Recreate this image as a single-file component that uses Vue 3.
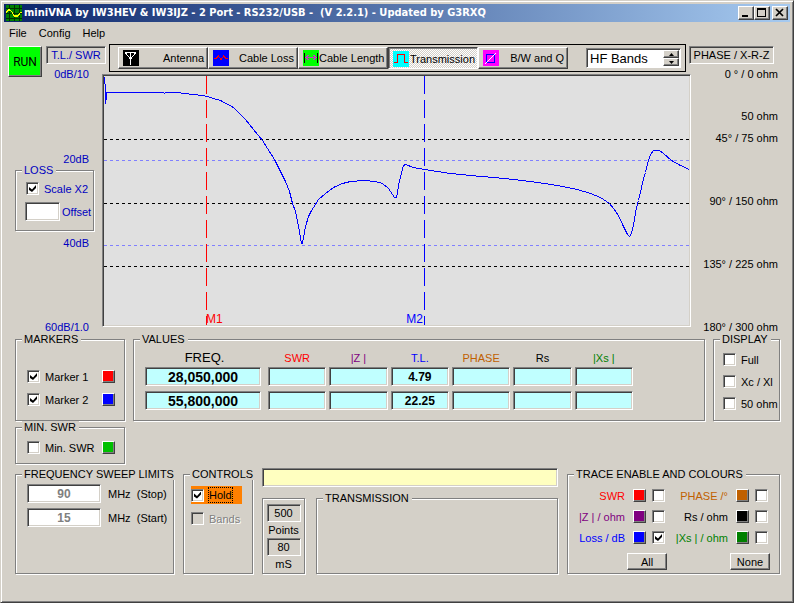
<script setup>
import { ref, computed } from 'vue'

const scaleX2 = ref(true)
const hold = ref(true)
const bands = ref(false)
const minSwr = ref(false)
const offset = ref('')
const stop = ref('90')
const start = ref('15')
const band = ref('HF Bands')
const mode = ref('Transmission')

const modes = ['Antenna', 'Cable Loss', 'Cable Length', 'Transmission', 'B/W and Q']

const markers = ref([
  { label: 'Marker 1', on: true, tone: 'red' },
  { label: 'Marker 2', on: true, tone: 'blue' }
])

const displays = ref([
  { label: 'Full', on: false },
  { label: 'Xc / Xl', on: false },
  { label: '50 ohm', on: false }
])

const traces = ref([
  { label: 'SWR', tone: 'red', on: false },
  { label: 'PHASE /°', tone: 'orange', on: false },
  { label: '|Z | / ohm', tone: 'purple', on: false },
  { label: 'Rs / ohm', tone: 'black', on: false },
  { label: 'Loss / dB', tone: 'blue', on: true },
  { label: '|Xs | / ohm', tone: 'green', on: false }
])

const columns = [
  { label: 'FREQ.', tone: 'freq' },
  { label: 'SWR', tone: 'red' },
  { label: '|Z |', tone: 'purple' },
  { label: 'T.L.', tone: 'blue' },
  { label: 'PHASE', tone: 'orange' },
  { label: 'Rs', tone: 'black' },
  { label: '|Xs |', tone: 'green' }
]

const rows = [
  ['28,050,000', '', '', '4.79', '', '', ''],
  ['55,800,000', '', '', '22.25', '', '', '']
]

const curve = [
  [0, 0], [0, 7], [1, 8], [1, 27], [2, 21], [2, 16], [59, 16], [60, 17], [61, 16], [72, 16],
  [80, 17], [89, 18], [98, 19], [103, 20], [109, 22], [116, 24], [129, 31], [141, 43], [149, 53],
  [158, 64], [170, 83], [176, 95], [181, 105], [185, 115], [188, 127], [191, 135], [193, 145],
  [195, 155], [197, 167], [198, 167], [199, 161], [201, 150], [204, 140], [207, 134], [211, 128],
  [214, 123], [221, 117], [229, 111], [238, 107], [246, 105], [259, 104], [271, 105], [278, 107],
  [284, 112], [288, 118], [290, 121], [292, 121], [295, 104], [298, 93], [299, 89], [301, 88],
  [309, 91], [320, 93], [326, 94], [346, 97], [366, 99], [389, 101], [409, 103], [433, 106],
  [453, 109], [473, 113], [486, 117], [496, 121], [505, 127], [509, 132], [514, 139], [519, 150],
  [523, 158], [525, 160], [527, 157], [529, 149], [532, 131], [534, 124], [537, 111], [539, 102],
  [541, 96], [544, 84], [546, 78], [549, 74], [555, 74], [559, 77], [567, 84], [576, 89], [585, 93]
]
const curvePoints = computed(() => curve.map(p => p.join(',')).join(' '))

function setAll(value) {
  traces.value.forEach(t => { t.on = value })
}
</script>

<template>
  <main class="window">
    <header class="titlebar">
      <svg class="app-icon" viewBox="0 0 16 16" shape-rendering="crispEdges">
        <rect width="16" height="16" fill="#008000" />
        <path d="M3.500 0V16M8.500 0V16M13.500 0V16M0 3.500H16M0 8.500H16M0 13.500H16" stroke="#003000" />
        <path d="M0 8L2 5H4L6 7L8 11H12L14 8L16 7" fill="none" stroke="#ff0" stroke-width="1.300" />
      </svg>
      <h1>miniVNA by IW3HEV &amp; IW3IJZ - 2 Port - RS232/USB -&nbsp; (V 2.2.1) - Updated by G3RXQ</h1>
      <div class="caption-buttons">
        <button type="button" aria-label="Minimize"><svg viewBox="0 0 12 10" shape-rendering="crispEdges"><rect x="2" y="7" width="6" height="2" /></svg></button>
        <button type="button" aria-label="Maximize"><svg viewBox="0 0 12 10" shape-rendering="crispEdges"><path d="M1 0H10V9H1ZM2 2V8H9V2Z" fill-rule="evenodd" /></svg></button>
        <button type="button" class="close" aria-label="Close"><svg viewBox="0 0 12 10"><path d="M2 1L9 8M9 1L2 8" stroke="#000" stroke-width="1.700" /></svg></button>
      </div>
    </header>

    <nav class="menu">
      <a href="#file">File</a>
      <a href="#config">Config</a>
      <a href="#help">Help</a>
    </nav>

    <section class="topbar">
      <button type="button" class="run">RUN</button>
      <div class="axis-title blue-dark">T.L./ SWR</div>
      <div class="toolbar">
        <button v-for="(m, i) in modes" :key="m" type="button" class="mode" :class="{ pressed: mode === m }" @click="mode = m">
          <svg viewBox="0 0 16 16" shape-rendering="crispEdges">
            <template v-if="i === 0">
              <rect width="16" height="16" fill="#000" />
              <path d="M2 2.500H13M7.500 2V15M2.500 3L7.500 9L12.500 3" fill="none" stroke="#fff" />
            </template>
            <template v-else-if="i === 1">
              <rect width="16" height="16" fill="#00f" />
              <path d="M1 8.500H3L5.500 6L8 9.500L10.500 6L13 8.500H15" fill="none" stroke="#f00" />
            </template>
            <template v-else-if="i === 2">
              <rect width="16" height="16" fill="#0f0" />
              <path d="M1.500 3V13M14.500 3V13" stroke="#000" />
              <path d="M3 7.500H13M5.500 5L3 7.500L5.500 10M10.500 5L13 7.500L10.500 10" fill="none" stroke="#c040c0" />
            </template>
            <template v-else-if="i === 3">
              <rect width="16" height="16" fill="#0ff" />
              <path d="M1 11.500H4.500V3.500H11.500V11.500H15" fill="none" stroke="#f00" />
            </template>
            <template v-else>
              <rect width="16" height="16" fill="#f0f" />
              <rect x="3.500" y="4.500" width="8" height="8" fill="none" stroke="#00f" />
              <path d="M2 14L13 3" stroke="#fff" />
            </template>
          </svg>
          <span>{{ m }}</span>
        </button>
        <div class="spin">
          <input v-model="band" type="text" aria-label="Band">
          <div class="spin-buttons">
            <button type="button" aria-label="Previous band"><svg viewBox="0 0 5 3"><path d="M0 3H5L2.500 0Z" /></svg></button>
            <button type="button" aria-label="Next band"><svg viewBox="0 0 5 3"><path d="M0 0H5L2.500 3Z" /></svg></button>
          </div>
        </div>
      </div>
      <div class="axis-title phase">PHASE / X-R-Z</div>
    </section>

    <section class="chart-row">
      <div class="scale-left blue-dark">
        <span>0dB/10</span>
        <span class="db20">20dB</span>
        <fieldset class="loss">
          <legend>LOSS</legend>
          <label><input v-model="scaleX2" type="checkbox"><span>Scale X2</span></label>
          <label><input v-model="offset" type="text"><span>Offset</span></label>
        </fieldset>
        <span class="db40">40dB</span>
        <span class="db60">60dB/1.0</span>
      </div>

      <div class="plot">
        <svg viewBox="0 0 585 249" role="img" aria-label="Transmission loss sweep">
          <g shape-rendering="crispEdges" fill="none">
            <path d="M0 63.500H585M0 127.500H585M0 190.500H585" stroke="#000" stroke-dasharray="3 3" />
            <path d="M0 84.500H585M0 169.500H585" stroke="#8080ff" stroke-dasharray="3 3" />
            <path d="M102.500 0V249" stroke="#f00" stroke-dasharray="18 6" />
            <path d="M320.500 0V249" stroke="#00f" stroke-dasharray="18 6" />
          </g>
          <polyline :points="curvePoints" transform="translate(.5 .5)" fill="none" stroke="#00f" shape-rendering="crispEdges" />
          <text x="102" y="247" fill="#f00">M1</text>
          <text x="319" y="247" fill="#00f" text-anchor="end">M2</text>
        </svg>
      </div>

      <div class="scale-right">
        <span>0 ° / 0 ohm</span>
        <span class="ohm50">50 ohm</span>
        <span class="deg45">45° / 75 ohm</span>
        <span class="deg">90° / 150 ohm</span>
        <span class="deg">135° / 225 ohm</span>
        <span class="deg">180° / 300 ohm</span>
      </div>
    </section>

    <section class="value-row">
      <div class="marker-col">
        <fieldset class="markers">
          <legend>MARKERS</legend>
          <div v-for="m in markers" :key="m.label" class="marker">
            <label><input v-model="m.on" type="checkbox"><span>{{ m.label }}</span></label>
            <button type="button" class="swatch" :class="m.tone" :aria-label="m.label + ' colour'"></button>
          </div>
        </fieldset>
        <fieldset class="minswr">
          <legend>MIN. SWR</legend>
          <div class="marker">
            <label><input v-model="minSwr" type="checkbox"><span>Min. SWR</span></label>
            <button type="button" class="swatch lime" aria-label="Min. SWR colour"></button>
          </div>
        </fieldset>
      </div>

      <fieldset class="values">
        <legend>VALUES</legend>
        <table>
          <thead>
            <tr><th v-for="c in columns" :key="c.label" :class="'t-' + c.tone">{{ c.label }}</th></tr>
          </thead>
          <tbody>
            <tr v-for="(r, i) in rows" :key="i">
              <td v-for="(v, j) in r" :key="j"><div class="cell">{{ v }}</div></td>
            </tr>
          </tbody>
        </table>
      </fieldset>

      <fieldset class="display">
        <legend>DISPLAY</legend>
        <label v-for="d in displays" :key="d.label"><input v-model="d.on" type="checkbox"><span>{{ d.label }}</span></label>
      </fieldset>
    </section>

    <section class="bottom-row">
      <fieldset class="sweep">
        <legend>FREQUENCY SWEEP LIMITS</legend>
        <label><input v-model="stop" type="text"><span>MHz&nbsp; (Stop)</span></label>
        <label><input v-model="start" type="text"><span>MHz&nbsp; (Start)</span></label>
      </fieldset>

      <fieldset class="controls">
        <legend>CONTROLS</legend>
        <label class="hold"><input v-model="hold" type="checkbox"><span>Hold</span></label>
        <label class="bands"><input v-model="bands" type="checkbox" disabled><span>Bands</span></label>
      </fieldset>

      <div class="middle">
        <div class="message" role="status"></div>
        <div class="middle-lower">
          <div class="points">
            <output>500</output>
            <span>Points</span>
            <output>80</output>
            <span>mS</span>
          </div>
          <fieldset class="transmission">
            <legend>TRANSMISSION</legend>
          </fieldset>
        </div>
      </div>

      <fieldset class="trace">
        <legend>TRACE ENABLE AND COLOURS</legend>
        <div class="trace-grid">
          <div v-for="(t, i) in traces" :key="t.label" class="trace-item">
            <label :for="'trace' + i" :class="'t-' + t.tone">{{ t.label }}</label>
            <button type="button" class="swatch" :class="t.tone" :aria-label="t.label + ' colour'"></button>
            <input :id="'trace' + i" v-model="t.on" type="checkbox">
          </div>
        </div>
        <div class="trace-buttons">
          <button type="button" @click="setAll(true)">All</button>
          <button type="button" @click="setAll(false)">None</button>
        </div>
      </fieldset>
    </section>
  </main>
</template>

<style>
body {
  background: #d4d0c8;
}
</style>

<style scoped>
.window {
  box-sizing: border-box;
  min-height: 100vh;
  padding: 2px 2px 27px;
  border: 1px solid;
  border-color: #d4d0c8 #404040 #404040 #d4d0c8;
  box-shadow: inset 1px 1px #fff, inset -1px -1px #808080;
  background: #d4d0c8;
  color: #000;
  font: 11px/12px "Liberation Sans", Arial, sans-serif;
}
.window *,
.window *::before {
  box-sizing: border-box;
}
button,
input {
  margin: 0;
  padding: 0;
  font: inherit;
  color: inherit;
  border-radius: 0;
}
button {
  border: 1px solid;
  border-color: #fff #404040 #404040 #fff;
  box-shadow: inset -1px -1px #808080;
  background: #d4d0c8;
}
input[type="text"] {
  border: 1px solid;
  border-color: #808080 #fff #fff #808080;
  box-shadow: inset 1px 1px #404040, inset -1px -1px #d4d0c8;
  background: #fff;
}
input[type="checkbox"] {
  appearance: none;
  flex: none;
  width: 13px;
  height: 13px;
  border: 1px solid;
  border-color: #808080 #fff #fff #808080;
  box-shadow: inset 1px 1px #404040, inset -1px -1px #d4d0c8;
  background: #fff;
}
input[type="checkbox"]:checked::before {
  content: "";
  display: block;
  width: 7px;
  height: 7px;
  margin: 2px;
  background: #000;
  clip-path: polygon(0 29%, 43% 64%, 100% 0, 100% 43%, 43% 100%, 0 71%);
}
input[type="checkbox"]:disabled {
  background: #d4d0c8;
}
fieldset {
  min-width: 0;
  margin: 0;
  padding: 0;
  border: 1px solid #808080;
  box-shadow: 1px 1px #fff, inset 1px 1px #fff;
}
legend {
  margin-left: 6px;
  padding: 0 3px 0 2px;
  background: #d4d0c8;
  white-space: nowrap;
}
label {
  display: flex;
  align-items: center;
  white-space: nowrap;
}

.titlebar {
  display: flex;
  align-items: center;
  height: 18px;
  margin: 1px;
  padding: 0 2px;
  background: linear-gradient(90deg, #0a246a, #a6caf0);
}
.app-icon {
  width: 16px;
  height: 16px;
}
h1 {
  flex: 1;
  margin: 0 0 0 2px;
  color: #fff;
  font: bold 11px/18px "DejaVu Sans Condensed", "DejaVu Sans", sans-serif;
  white-space: nowrap;
}
.caption-buttons {
  display: flex;
}
.caption-buttons button {
  width: 16px;
  height: 14px;
}
.caption-buttons svg {
  display: block;
  width: 12px;
  height: 10px;
  margin: 1px;
}
.caption-buttons .close {
  margin-left: 2px;
}
.menu {
  display: flex;
  gap: 12px;
  height: 21px;
  padding: 2px 6px;
  line-height: 16px;
}
.menu a {
  color: inherit;
  text-decoration: none;
}

.topbar {
  display: flex;
  align-items: flex-start;
  height: 28px;
  padding: 0 5px;
}
.run {
  flex: none;
  width: 34px;
  height: 31px;
  margin: 2px 4px 0 0;
  background: #0f0;
  font-family: Roboto, sans-serif;
  font-size: 12px;
}
.axis-title {
  flex: none;
  width: 60px;
  height: 18px;
  margin-top: 2px;
  border: 1px solid;
  border-color: #808080 #fff #fff #808080;
  box-shadow: inset 1px 1px #404040;
  line-height: 17px;
  text-align: center;
  white-space: nowrap;
}
.axis-title.phase {
  width: 85px;
  margin-right: 12px;
}
.blue-dark {
  color: #0000c0;
}
.toolbar {
  display: flex;
  flex: 1;
  align-items: center;
  height: 28px;
  margin: 0 3px;
  padding: 0 4px 0 8px;
  border: 1px solid #000;
}
.mode {
  display: flex;
  flex: none;
  align-items: center;
  justify-content: space-between;
  width: 90px;
  height: 22px;
  padding: 0 3px 0 4px;
  line-height: 16px;
  white-space: nowrap;
}
.mode svg {
  flex: none;
  width: 16px;
  height: 16px;
}
.mode.pressed {
  padding-top: 2px;
  padding-right: 2px;
  border-color: #404040 #fff #fff #404040;
  box-shadow: inset 1px 1px #808080;
  background: conic-gradient(#fff 25%, #d4d0c8 0 50%, #fff 0 75%, #d4d0c8 0) 0 0 / 2px 2px;
}
.spin {
  display: flex;
  width: 95px;
  height: 20px;
  margin-left: auto;
  padding: 1px;
  border: 1px solid;
  border-color: #808080 #fff #fff #808080;
  box-shadow: inset 1px 1px #404040;
  background: #fff;
}
.spin input {
  flex: 1;
  min-width: 0;
  padding-left: 2px;
  border: 0;
  box-shadow: none;
  font-size: 13px;
}
.spin-buttons {
  display: flex;
  flex-direction: column;
  width: 16px;
}
.spin-buttons button {
  display: flex;
  flex: 1;
  align-items: center;
  justify-content: center;
}
.spin-buttons svg {
  width: 5px;
  height: 3px;
}

.chart-row {
  display: flex;
  align-items: flex-start;
  padding-top: 2px;
}
.scale-left {
  display: flex;
  flex: none;
  flex-direction: column;
  align-items: flex-end;
  width: 99px;
  margin-top: -6px;
  padding-right: 13px;
}
.scale-left .db20 {
  margin-top: 73px;
}
.scale-left .db40 {
  margin-top: 6px;
}
.scale-left .db60 {
  margin-top: 72px;
}
.loss {
  width: 79px;
  height: 67px;
  margin: -1px -5px 0 0;
}
.loss label {
  gap: 5px;
  padding-left: 10px;
}
.loss label + label {
  gap: 2px;
  margin-top: 7px;
  padding-left: 9px;
}
.loss legend + label {
  margin-top: 6px;
}
.loss input[type="text"] {
  width: 35px;
  height: 19px;
}
.plot {
  flex: 1;
  min-width: 0;
  padding: 1px;
  border: 1px solid;
  border-color: #808080 #fff #fff #808080;
  box-shadow: inset 1px 1px #404040, inset -1px -1px #d4d0c8;
  background: #e0e0e0;
}
.plot svg {
  display: block;
  width: 100%;
}
.plot text {
  font-size: 12px;
}
.scale-right {
  display: flex;
  flex: none;
  flex-direction: column;
  align-items: flex-end;
  width: 100px;
  margin-top: -6px;
  padding-right: 13px;
  white-space: nowrap;
}
.ohm50 {
  margin-top: 30px;
}
.deg45 {
  margin-top: 10px;
}
.deg {
  margin-top: 51px;
}

.value-row {
  display: flex;
  align-items: flex-start;
  gap: 8px;
  padding: 0 11px 0 12px;
}
.marker-col {
  display: flex;
  flex: none;
  flex-direction: column;
  width: 110px;
}
.markers,
.values,
.display {
  height: 88px;
}
.minswr {
  height: 43px;
}
.marker {
  display: flex;
  align-items: center;
  justify-content: space-between;
  padding: 0 9px 0 11px;
}
.marker label,
.display label {
  gap: 5px;
}
.marker + .marker {
  margin-top: 10px;
}
.markers legend + .marker {
  margin-top: 25px;
}
.minswr .marker {
  margin-top: 8px;
}
.swatch {
  flex: none;
  width: 13px;
  height: 13px;
}
.swatch.red { background: #f00; }
.swatch.blue { background: #00f; }
.swatch.lime { background: #00c000; }
.swatch.orange { background: #c06000; }
.swatch.purple { background: #800080; }
.swatch.black { background: #000; }
.swatch.green { background: #008000; }
.t-red { color: #f00; }
.t-blue { color: #00f; }
.t-orange { color: #c06000; }
.t-purple { color: #800080; }
.t-green { color: #008000; }

.values {
  flex: 1;
}
table {
  width: 100%;
  max-width: 491px;
  margin: 3px 0 0 11px;
  border-collapse: collapse;
  table-layout: fixed;
}
th {
  height: 19px;
  padding: 0 3px 0 0;
  font-weight: normal;
}
th:first-child {
  width: 123px;
  padding-right: 4px;
  font-size: 13px;
}
td {
  padding: 0 3px 5px 0;
}
td:first-child {
  padding-right: 7px;
}
.cell {
  height: 19px;
  border: 1px solid;
  border-color: #808080 #fff #fff #808080;
  box-shadow: inset 1px 1px #404040, inset -1px -1px #d4d0c8;
  background: #c0ffff;
  font-size: 12px;
  font-weight: bold;
  line-height: 18px;
  text-align: center;
}
td:first-child .cell {
  font-size: 14px;
}
.display {
  width: 67px;
}
.display label {
  margin-top: 9px;
  padding-left: 9px;
}
.display legend + label {
  margin-top: 8px;
}

.bottom-row {
  display: flex;
  gap: 9px;
  height: 106px;
  margin-top: 4px;
  padding: 0 11px 0 12px;
}
.sweep {
  flex: none;
  width: 159px;
}
.sweep label {
  gap: 7px;
  margin-top: 5px;
  padding-left: 11px;
}
.sweep legend + label {
  margin-top: 4px;
}
.sweep input {
  width: 74px;
  height: 19px;
  color: #808080;
  font-size: 12px;
  font-weight: bold;
  text-align: center;
}
.controls {
  flex: none;
  width: 70px;
}
.controls label {
  margin-left: 7px;
}
.controls .hold {
  width: 51px;
  height: 18px;
  margin-top: 6px;
  background: #ff8000;
}
.hold span {
  margin-left: 5px;
  padding: 1px 0;
  outline: 1px dotted #000;
}
.controls .bands {
  gap: 5px;
  margin-top: 8px;
  color: #808080;
  text-shadow: 1px 1px #fff;
}
.middle {
  display: flex;
  flex: 1;
  flex-direction: column;
  min-width: 0;
}
.message {
  height: 19px;
  border: 1px solid;
  border-color: #808080 #fff #fff #808080;
  box-shadow: inset 1px 1px #404040, inset -1px -1px #d4d0c8;
  background: #ffffc0;
}
.middle-lower {
  display: flex;
  flex: 1;
  gap: 11px;
  margin-top: 5px;
}
.points {
  display: flex;
  flex: none;
  flex-direction: column;
  align-items: center;
  justify-content: space-between;
  width: 43px;
  margin-top: 6px;
  padding: 5px 4px 3px;
  border: 1px solid #808080;
  box-shadow: 1px 1px #fff, inset 1px 1px #fff;
}
.points output {
  width: 34px;
  height: 18px;
  border: 1px solid;
  border-color: #808080 #fff #fff #808080;
  box-shadow: inset 1px 1px #404040;
  line-height: 17px;
  text-align: center;
}
.transmission {
  flex: 1;
}
.trace {
  flex: none;
  width: 213px;
}
.trace-grid {
  display: grid;
  grid-template-columns: 97px 103px;
  row-gap: 8px;
  margin-top: 9px;
}
.trace-item {
  display: flex;
  align-items: center;
  justify-content: flex-end;
}
.trace-item .swatch {
  margin: 0 6px 0 8px;
}
.trace-buttons {
  display: flex;
  justify-content: flex-end;
  gap: 63px;
  margin-top: 9px;
  padding-right: 9px;
}
.trace-buttons button {
  width: 40px;
  height: 17px;
}
</style>
